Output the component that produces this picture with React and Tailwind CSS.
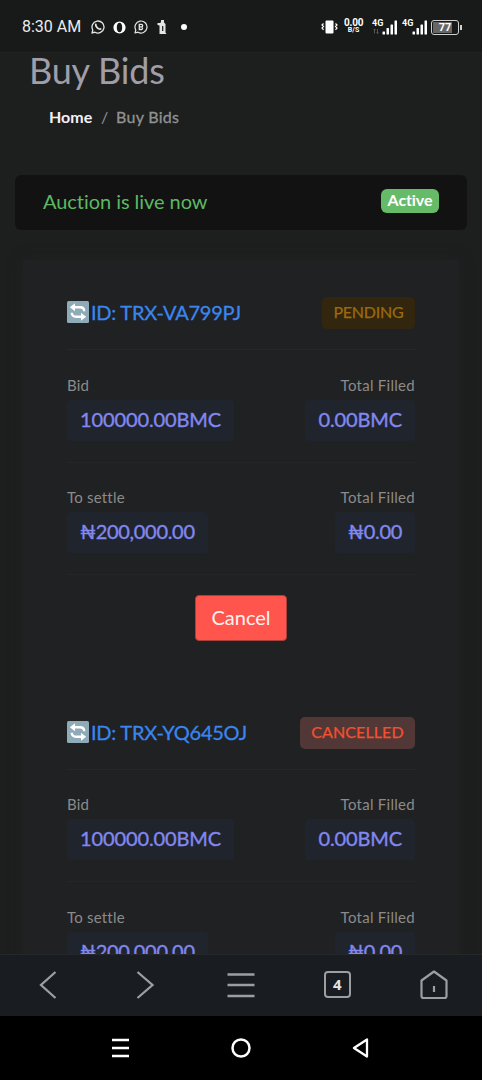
import React from 'react';

const BIDS = [
  {
    id: 'TRX-VA799PJ',
    status: 'PENDING',
    bid: '100000.00BMC',
    bidFilled: '0.00BMC',
    settle: '₦200,000.00',
    settleFilled: '₦0.00',
  },
  {
    id: 'TRX-YQ645OJ',
    status: 'CANCELLED',
    bid: '100000.00BMC',
    bidFilled: '0.00BMC',
    settle: '₦200,000.00',
    settleFilled: '₦0.00',
  },
];

const STATUS_STYLES = {
  PENDING: 'w-[93px] bg-[#33260f] text-[#9c6a0c] tracking-[-0.2px]',
  CANCELLED: 'w-[115px] bg-[#513836] text-[#f4502f] tracking-[0.1px]',
};

function WhatsAppIcon() {
  return (
    <svg width="14" height="14" viewBox="0 0 14 14" fill="none" stroke="#e4e4e4">
      <path d="M1 13l.8-3A6 6 0 1 1 4 12.2z" strokeWidth="1.3" strokeLinejoin="round" />
      <path d="M4.8 4.3c-.6 2 2.5 5.3 4.8 4.7" strokeWidth="1.8" strokeLinecap="round" />
    </svg>
  );
}

function OperaIcon() {
  return (
    <svg width="13" height="13" viewBox="0 0 13 13">
      <path
        fillRule="evenodd"
        fill="#fff"
        d="M6.500 .4a6.100 6.100 0 1 1 0 12.200a6.100 6.100 0 0 1 0-12.200zM6.500 1.700c-1.600 0-2.700 2-2.700 4.800s1.100 4.800 2.700 4.800s2.700-2 2.700-4.800s-1.100-4.800-2.700-4.800z"
      />
    </svg>
  );
}

function BusinessChatIcon() {
  return (
    <svg width="14" height="14" viewBox="0 0 14 14" fill="none" stroke="#e4e4e4">
      <path d="M1 13l.8-3A6 6 0 1 1 4 12.2z" strokeWidth="1.2" strokeLinejoin="round" />
      <path d="M5.300 4.300v5.200h2.200a1.400 1.400 0 0 0 0-2.700a1.250 1.250 0 0 0-.2-2.500zM5.300 6.800h2.200" strokeWidth="1.3" />
    </svg>
  );
}

function BottleIcon() {
  return (
    <svg width="11" height="14" viewBox="0 0 11 14">
      <path fill="#e4e4e4" d="M4 0h3v2.500l1.500 1.500v8.500L9.500 14H2.500V5.500L.5 5V3h2.500l1-.8z" />
      <path stroke="#181919" strokeWidth="1.2" d="M5.700 6v5" />
    </svg>
  );
}

function VibrateIcon() {
  return (
    <svg width="17" height="14" viewBox="0 0 17 14">
      <rect x="4.500" y=".5" width="8" height="13" rx="1" fill="#fff" />
      <path
        d="M2.500 3.500L1 5l1.500 1.500L1 8l1.500 1.800M14.500 3.500L16 5l-1.500 1.500L16 8l-1.500 1.800"
        stroke="#fff"
        strokeWidth="1.2"
        fill="none"
      />
    </svg>
  );
}

function Signal({ data }) {
  return (
    <div className="relative h-4 w-[26px] shrink-0">
      <span className="absolute left-0 top-0 font-[Roboto] text-[9px] leading-[9px] font-bold text-white">4G</span>
      <svg className="absolute inset-0" width="26" height="16" viewBox="0 0 26 16" fill="#fff">
        <rect x="10.500" y="12.500" width="2.500" height="3" rx=".5" />
        <rect x="14.500" y="9" width="2.500" height="6.500" rx=".5" />
        <rect x="18.500" y="5.500" width="2.500" height="10" rx=".5" />
        <rect x="22.500" y="1.500" width="2.500" height="14" rx=".5" />
        {data && <path d="M2.500 10v4.500M1.500 11l1-1 1 1M5.500 10v4.500M4.500 13.500l1 1 1-1" stroke="#666" strokeWidth=".8" fill="none" />}
      </svg>
    </div>
  );
}

function StatusBar() {
  return (
    <div className="flex h-[53px] shrink-0 items-center justify-between border-b border-[#202222] bg-[#181919] pt-[2px] pl-[22px] pr-[20px] text-white">
      <div className="flex items-center">
        <span className="w-[69px] whitespace-nowrap font-[Roboto] text-[16px] leading-5 text-[#ececec]">8:30 AM</span>
        <WhatsAppIcon />
        <span className="ml-2"><OperaIcon /></span>
        <span className="ml-2"><BusinessChatIcon /></span>
        <span className="ml-[9px]"><BottleIcon /></span>
        <span className="ml-[13px] size-[6px] rounded-full bg-white" />
      </div>
      <div className="flex items-center">
        <VibrateIcon />
        <div className="mr-px ml-[6px] w-[19px] pb-[2px] text-center font-[Roboto] font-bold">
          <div className="text-[10px] leading-[9px] tracking-[-0.2px]">0.00</div>
          <div className="text-[7px] leading-[7px]">B/S</div>
        </div>
        <div className="ml-2 flex gap-1">
          <Signal data />
          <Signal />
        </div>
        <div className="ml-[3px] flex items-center">
          <div className="flex h-[15px] w-[28px] rounded-[3px] border border-[#d0d0d0] p-px">
            <div className="flex-1 bg-linear-to-r from-[#666] from-80% to-[#181919] to-80% text-center font-[Roboto] text-[11px] leading-[12px] font-bold">
              77
            </div>
          </div>
          <div className="ml-px h-[5px] w-[2px] bg-[#d0d0d0]" />
        </div>
      </div>
    </div>
  );
}

function RepeatEmoji() {
  return (
    <svg width="22" height="22" viewBox="0 0 22 22" className="mr-[2px] shrink-0">
      <rect width="22" height="22" rx="1.5" fill="#8eabb7" />
      <path d="M7.500 6.300h5.500c2.500 0 4.200 1.500 4.200 4M14.500 15.700H9c-2.500 0-4.200-1.500-4.200-4" fill="none" stroke="#fff" strokeWidth="2.400" />
      <path fill="#fff" d="M2.800 6.300L8 2.300v8zM19.200 15.700L14 19.700v-8z" />
    </svg>
  );
}

function Amount({ label, value, right }) {
  const isNaira = value.startsWith('₦');
  return (
    <div className={right ? 'flex flex-col items-end' : 'flex flex-col items-start'}>
      <span className={`h-[30px] text-[15px] leading-[30px] text-[#8b8b8b] ${right ? 'tracking-[0.28px]' : 'tracking-[0.2px]'}`}>
        {label}
      </span>
      <span
        className={`h-[41px] rounded-[4px] bg-[#20242c] px-[13px] text-[20px] leading-[38px] text-[#8288ef] [-webkit-text-stroke:0.35px] ${
          isNaira ? 'tracking-[-0.3px]' : 'tracking-[-0.12px]'
        }`}
      >
        {value}
      </span>
    </div>
  );
}

function BidCard({ bid }) {
  return (
    <div className="shrink-0 px-[44px]">
      <div className="flex h-[90px] items-center justify-between border-b border-[#272829] pt-[17px]">
        <div className="flex items-center pb-[2px] text-[20px] text-[#3a86ee]">
          <RepeatEmoji />
          <span className="whitespace-nowrap tracking-[-0.25px] [-webkit-text-stroke:0.3px]">ID: {bid.id}</span>
        </div>
        <span
          className={`h-8 rounded-[5px] text-center text-[16px] leading-[30px] [-webkit-text-stroke:0.25px] ${STATUS_STYLES[bid.status]}`}
        >
          {bid.status}
        </span>
      </div>
      <div className="flex h-[112.5px] justify-between border-b border-[#252627] pt-[19.5px]">
        <Amount label="Bid" value={bid.bid} />
        <Amount label="Total Filled" value={bid.bidFilled} right />
      </div>
      <div className="flex h-[112.5px] justify-between border-b border-[#252627] pt-[19.5px]">
        <Amount label="To settle" value={bid.settle} />
        <Amount label="Total Filled" value={bid.settleFilled} right />
      </div>
      {bid.status === 'PENDING' && (
        <div className="flex h-[97px] justify-center pt-[20px]">
          <button className="h-[46px] w-[92px] rounded-[4px] border border-[#a8403b] bg-[#ff554d] pb-[3px] text-[20px] text-[#fff2f0]">
            Cancel
          </button>
        </div>
      )}
    </div>
  );
}

function BrowserBar() {
  return (
    <div className="grid h-[62px] shrink-0 grid-cols-5 place-items-center border-t border-[#25272a] bg-[#191c20] pb-[2px]">
      <svg width="30" height="30" viewBox="0 0 30 30" fill="none" stroke="#9c9fa2" strokeWidth="2.3">
        <path d="M22.500 2L8 15l14.500 13" />
      </svg>
      <svg width="30" height="30" viewBox="0 0 30 30" fill="none" stroke="#9c9fa2" strokeWidth="2.3">
        <path d="M7.500 2L22.500 15l-15 13" />
      </svg>
      <svg width="30" height="30" viewBox="0 0 30 30" fill="none" stroke="#9c9fa2" strokeWidth="2.3">
        <path d="M1.500 4.500h27M1.500 15h27M1.500 26h27" />
      </svg>
      <div className="flex size-[27px] items-center justify-center rounded-[4px] border-2 border-[#9c9fa2] font-['Open_Sans'] text-[15px] leading-none font-bold text-[#e2e4e6]">
        4
      </div>
      <svg width="30" height="30" viewBox="0 0 30 30" fill="none" stroke="#9c9fa2" strokeWidth="2.2" strokeLinejoin="round">
        <path d="M2.500 10.500L15 1.500l12.500 9V26a2 2 0 0 1-2 2h-21a2 2 0 0 1-2-2zM15 16v6" />
      </svg>
    </div>
  );
}

function SystemNav() {
  return (
    <div className="flex h-16 shrink-0 items-center justify-between bg-black px-[110px]">
      <svg width="20" height="20" viewBox="0 0 20 20" stroke="#fff" strokeWidth="2.6">
        <path d="M2 2h17M2 10h17M2 18h17" />
      </svg>
      <svg width="20" height="20" viewBox="0 0 20 20" fill="none" stroke="#fff" strokeWidth="2.5">
        <circle cx="10" cy="10" r="8.500" />
      </svg>
      <svg width="20" height="20" viewBox="0 0 20 20" fill="none" stroke="#fff" strokeWidth="2.3" strokeLinejoin="round">
        <path d="M15 1.500v17L2 10z" />
      </svg>
    </div>
  );
}

export default function App() {
  return (
    <div className="flex h-[1080px] w-[482px] flex-col overflow-hidden bg-[#1d1f1e] font-[Lato,'Noto_Sans',sans-serif] [font-variant-ligatures:none]">
      <StatusBar />
      <main className="-mt-2 flex min-h-0 flex-1 flex-col overflow-hidden pt-2">
        {/* Page header */}
        <h1 className="ml-[29px] h-[38px] shrink-0 text-[36px] leading-[35px] tracking-[-0.2px] text-[#a09ea8]">Buy Bids</h1>
        <nav className="ml-[49px] flex h-[84px] shrink-0 pt-[14px] text-[16px] leading-6">
          <span className="w-[52px] font-bold text-[#f5f0f8]">Home</span>
          <span className="w-[15px] text-[#929292]">/</span>
          <span className="tracking-[0.3px] text-[#929292] [-webkit-text-stroke:0.3px]">Buy Bids</span>
        </nav>

        {/* Auction state */}
        <div className="mx-[15px] flex h-[55px] shrink-0 items-center justify-between rounded-[6px] bg-[#121212] px-7 pb-[4px]">
          <span className="text-[20px] tracking-[-0.05px] text-[#5cb963]">Auction is live now</span>
          <span className="h-6 w-[58px] rounded-[6px] bg-[#66bb69] text-center text-[16px] leading-[22px] font-bold tracking-[-0.1px] text-white">
            Active
          </span>
        </div>

        {/* Bids */}
        <div className="mx-[23px] mt-[30px] flex flex-col gap-[7.5px] bg-[#202122] shadow-[0_0_12px_#202122]">
          {BIDS.map((bid) => (
            <BidCard key={bid.id} bid={bid} />
          ))}
        </div>
      </main>
      <BrowserBar />
      <SystemNav />
    </div>
  );
}
